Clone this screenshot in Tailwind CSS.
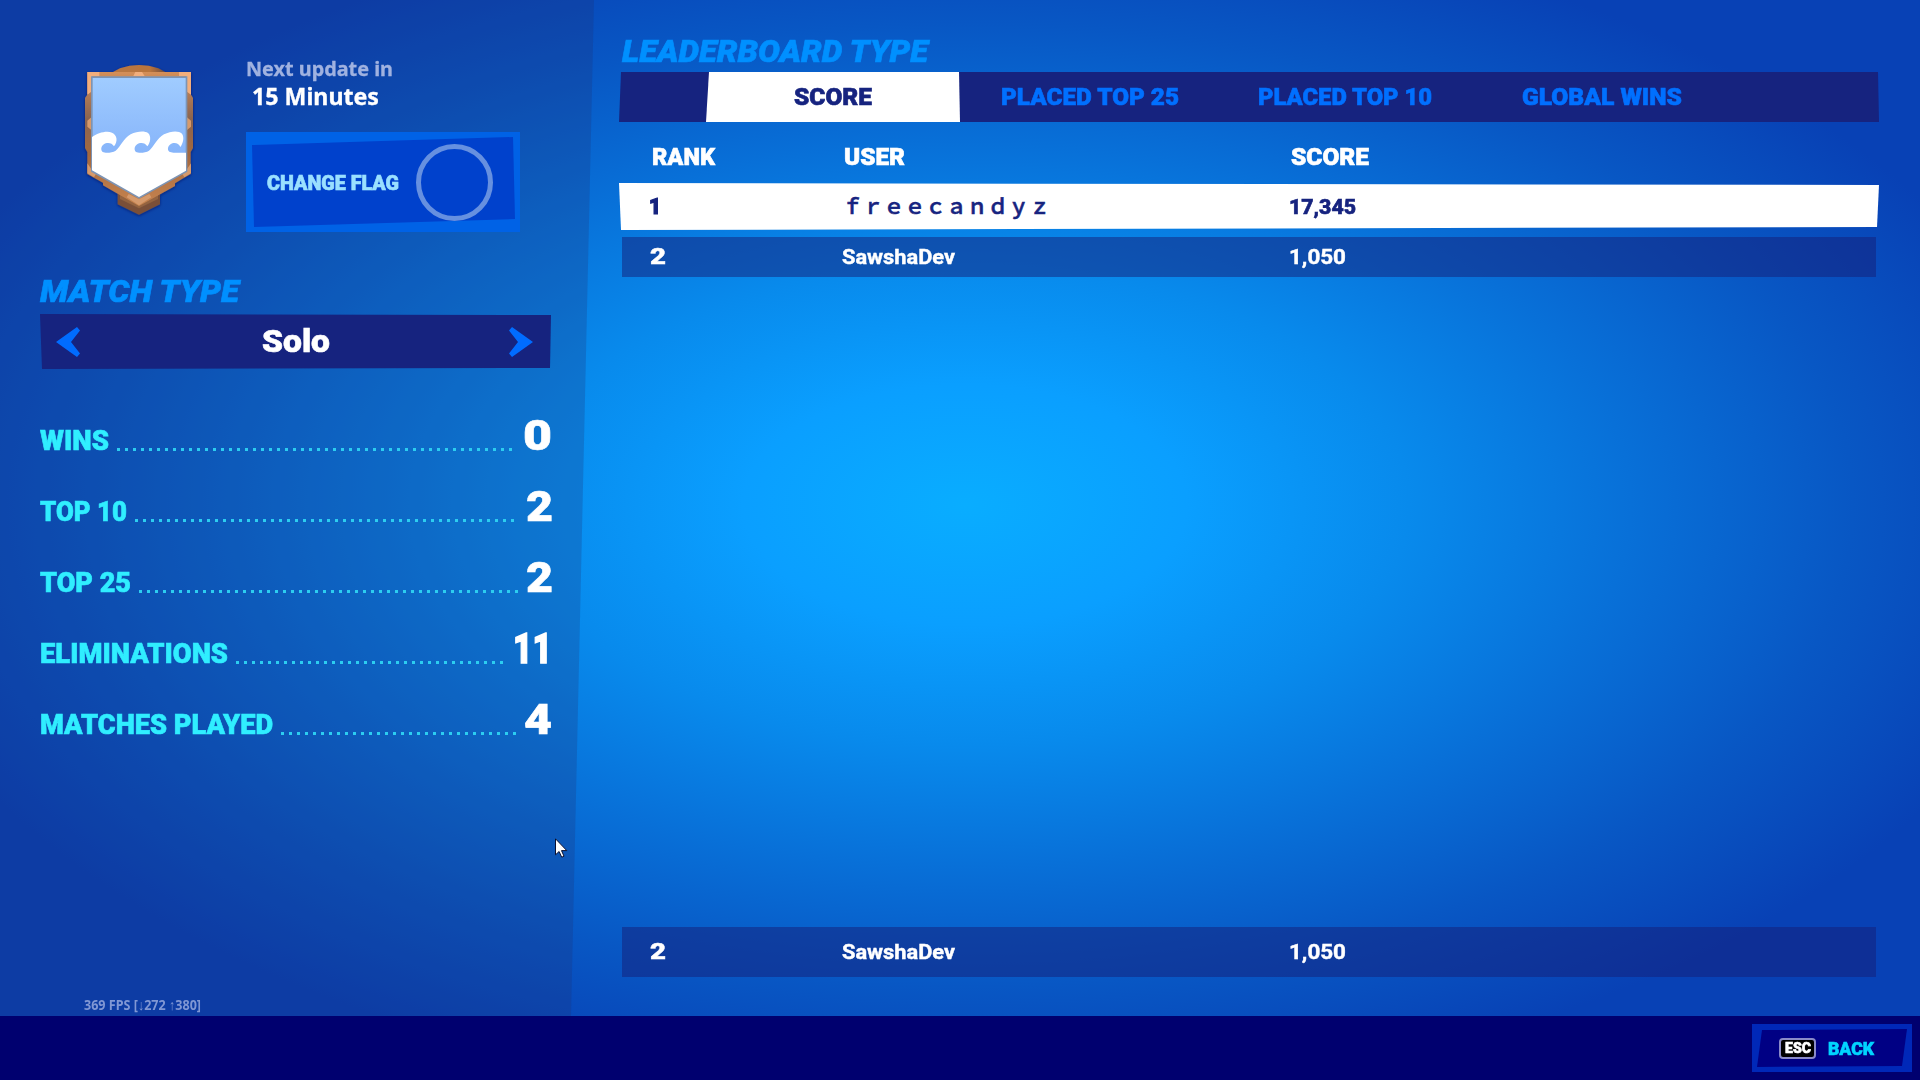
<!DOCTYPE html>
<html lang="en">
<head>
<meta charset="utf-8">
<title>Leaderboard</title>
<script src="https://cdn.jsdelivr.net/npm/@tailwindcss/browser@4"></script>
</head>
<body class="w-[1920px] h-[1080px] overflow-hidden flex flex-col font-['Roboto',sans-serif] font-black text-white relative [-webkit-text-stroke:0.6px]">
<main class="h-[1016px] flex bg-[radial-gradient(ellipse_1110px_602px_at_965px_505px,#09adff_0%,#0a9fff_20%,#088aec_40%,#0870d8_60%,#0857c4_80%,#0841b5_100%)]">

  <section class="w-[594px] h-full shrink-0 bg-[#1c2c70]/24 [clip-path:polygon(0_0,594px_0,571px_100%,0_100%)] flex flex-col relative">
    <div class="flex h-[232px]">
      <svg class="w-[140px] h-[170px] ml-[70px] mt-[50px] shrink-0" viewBox="0 0 420 510">
        <defs>
          <linearGradient id="sky" x2="0" y2="1"><stop offset="0" stop-color="#a0ccff"/><stop offset="1" stop-color="#86b4fa"/></linearGradient>
          <linearGradient id="wood" x2="0" y2="1"><stop offset="0" stop-color="#d58f58"/><stop offset=".35" stop-color="#8a6450"/><stop offset=".62" stop-color="#a4683e"/><stop offset="1" stop-color="#c78450"/></linearGradient>
          <linearGradient id="crest"><stop offset="0" stop-color="#b97844"/><stop offset=".7" stop-color="#b9743c"/><stop offset="1" stop-color="#6a4a3c"/></linearGradient>
          <filter id="soft" x="-20%" y="-20%" width="140%" height="140%"><feDropShadow dx="0" dy="3" stdDeviation="5" flood-color="#001050" flood-opacity=".6"/></filter>
        </defs>
        <g filter="url(#soft)">
          <path fill="#7a5039" d="M143 425h127v38l-63 31-64-31z"/>
          <path fill="#94633f" d="M150 425h114v22l-57 28-57-28z"/>
          <path fill="url(#crest)" d="M125 80V68l25-13q57-20 115 0l25 13v12z"/>
          <path fill="url(#wood)" d="M52 66h311v68l6 10v150l-7 12v66l-25 14-22 14v8l-108 60-108-62v-8l-47-26V306l-7-12V144l7-10z"/>
        </g>
        <path fill="#f2ae7c" d="M52 66h36v12H66v46l-14 10zM363 66h-36v12h22v46l14 10zM190 78l6-12h20l8 12z"/>
        <path fill="#d69a6c" d="M52 340l14 20 14 8-8 14-20-12zM363 340l-14 20-14 8 8 14 20-12zM52 212l12-10v38l-12-10zM363 212l-12-10v38l12-10zM176 432l31 16 31-16 6 10-37 24-37-24z"/>
        <path fill="#7d94b4" d="M63 79h289v286l-145 81L63 365z"/>
        <path fill="url(#sky)" d="M68 84h279v230H68z"/>
        <path fill="#fff" d="M66 261C82 249 110 241 126 248C142 255 144 274 132 289C127 280 117 277 107 280C94 285 90 299 98 306C106 310 126 309 137 302C152 291 160 265 182 253C202 243 224 242 234 249C245 258 241 279 232 289C227 280 217 277 207 280C194 285 190 299 198 306C206 310 226 309 237 302C252 291 260 265 282 253C302 243 326 241 336 251C344 262 339 281 331 291C327 281 317 277 307 280C294 285 290 299 298 305C306 309 330 309 348 308V362L207 441L66 361z"/>
      </svg>
      <div class="ml-9 pt-[56px] flex flex-col [-webkit-text-stroke:0.3px]">
        <div class="h-[26px] leading-[26px] text-[20px] font-bold text-[#a0b2e0] font-['Noto_Sans',sans-serif]"><span data-w="147" class="inline-block origin-left whitespace-nowrap">Next update in</span></div>
        <div class="h-[30px] leading-[30px] text-[22.5px] font-bold pl-[6px] font-['Noto_Sans',sans-serif]"><span data-w="127" class="inline-block origin-left whitespace-nowrap">15 Minutes</span></div>
        <button class="mt-5 w-[274px] h-[100px] shrink-0 bg-[#0062e6] relative text-left [-webkit-text-stroke:0.6px]">
          <span class="absolute inset-0 bg-[#0041cc] [clip-path:polygon(6px_13px,267px_5px,269px_87px,8px_95px)]"></span>
          <span class="relative flex items-center h-full pl-[21px]">
            <span class="w-[149px] text-[20px] text-[#9ae0ff] pt-px"><span data-w="132" class="inline-block origin-left whitespace-nowrap">CHANGE FLAG</span></span>
            <span class="w-[77px] h-[77px] rounded-full border-[5px] border-[#6690e0]"></span>
          </span>
        </button>
      </div>
    </div>

    <h2 class="mt-[42px] ml-10 h-[35px] leading-[36px] text-[31px] italic text-[#0090ff]"><span data-w="199" class="inline-block origin-left whitespace-nowrap">MATCH TYPE</span></h2>
    <div class="mt-[5px] ml-10 w-[511px] h-[55px] bg-[#16237f] [clip-path:polygon(0_0,511px_1px,510px_54px,2px_55px)] flex items-center justify-between pl-4 pr-[18px]">
      <svg class="w-6 h-[30px]" viewBox="0 0 24 30"><path fill="#006cff" d="M0 15 21 0l3 3.500L15 15l9 11.500L21 30z"/></svg>
      <div class="w-[66px] text-[31px] pt-px"><span data-w="68" class="inline-block origin-left whitespace-nowrap">Solo</span></div>
      <svg class="w-6 h-[30px]" viewBox="0 0 24 30"><path fill="#006cff" d="M24 15 3 0 0 3.500 9 15 0 26.500 3 30z"/></svg>
    </div>

    <div class="mt-[31px] ml-[40px] w-[511px] flex flex-col">
      <div class="h-[71px] flex items-center"><div class="w-[77px] pt-[11px] text-[27px] text-[#30eeff]"><span data-w="69" class="inline-block origin-left whitespace-nowrap">WINS</span></div><div class="w-[395px] h-[3px] mt-[27px] bg-[repeating-linear-gradient(90deg,#2ccdf0_0_3px,transparent_3px_8px)]"></div><div class="ml-auto w-[28px] text-[42px]"><span data-w="29" class="inline-block origin-left">0</span></div></div>
      <div class="h-[71px] flex items-center"><div class="w-[95px] pt-[11px] text-[27px] text-[#30eeff]"><span data-w="87" class="inline-block origin-left whitespace-nowrap">TOP 10</span></div><div class="w-[379px] h-[3px] mt-[27px] bg-[repeating-linear-gradient(90deg,#2ccdf0_0_3px,transparent_3px_8px)]"></div><div class="ml-auto w-[25px] text-[42px]"><span data-w="27" class="inline-block origin-left">2</span></div></div>
      <div class="h-[71px] flex items-center"><div class="w-[99px] pt-[11px] text-[27px] text-[#30eeff]"><span data-w="91" class="inline-block origin-left whitespace-nowrap">TOP 25</span></div><div class="w-[379px] h-[3px] mt-[27px] bg-[repeating-linear-gradient(90deg,#2ccdf0_0_3px,transparent_3px_8px)]"></div><div class="ml-auto w-[25px] text-[42px]"><span data-w="27" class="inline-block origin-left">2</span></div></div>
      <div class="h-[71px] flex items-center"><div class="w-[196px] pt-[11px] text-[27px] text-[#30eeff]"><span data-w="188" class="inline-block origin-left whitespace-nowrap">ELIMINATIONS</span></div><div class="w-[267px] h-[3px] mt-[27px] bg-[repeating-linear-gradient(90deg,#2ccdf0_0_3px,transparent_3px_8px)]"></div><div class="ml-auto w-[38px] text-[42px] [-webkit-text-stroke:1.4px]"><span data-w="39" class="inline-block origin-left">11</span></div></div>
      <div class="h-[71px] flex items-center"><div class="w-[241px] pt-[11px] text-[27px] text-[#30eeff]"><span data-w="233" class="inline-block origin-left whitespace-nowrap">MATCHES PLAYED</span></div><div class="w-[235px] h-[3px] mt-[27px] bg-[repeating-linear-gradient(90deg,#2ccdf0_0_3px,transparent_3px_8px)]"></div><div class="ml-auto w-[27px] text-[42px]"><span data-w="28" class="inline-block origin-left">4</span></div></div>
    </div>

    <div class="mt-auto mb-px ml-[84px] h-[22px] leading-[22px] text-[14.5px] font-bold text-[#8097d4] font-['Noto_Sans',sans-serif] [-webkit-text-stroke:0px]"><span data-w="117" class="inline-block origin-left whitespace-nowrap">369 FPS [↓272 ↑380]</span></div>
  </section>

  <section class="flex-1 pl-[25px] flex flex-col">
    <h2 class="mt-[34px] pl-[3px] h-[35px] leading-[36px] text-[31px] italic text-[#0090ff]"><span data-w="306" class="inline-block origin-left whitespace-nowrap">LEADERBOARD TYPE</span></h2>
    <nav class="mt-[3px] w-[1260px] h-[50px] bg-[#16237f] [clip-path:polygon(2px_0,1259px_0,1260px_50px,0_50px)] flex items-center text-[23.5px] text-[#0070ff]">
      <div class="ml-[87px] w-[254px] h-full bg-white text-[#16237f] [clip-path:polygon(3px_0,253px_0,254px_50px,0_50px)] flex items-center pl-[88px] pt-px"><span data-w="78" class="inline-block origin-left">SCORE</span></div>
      <div class="ml-[41px] w-[257px] pt-px"><span data-w="178" class="inline-block origin-left whitespace-nowrap">PLACED TOP 25</span></div>
      <div class="w-[264px] pt-px"><span data-w="174" class="inline-block origin-left whitespace-nowrap">PLACED TOP 10</span></div>
      <div class="pt-px"><span data-w="160" class="inline-block origin-left whitespace-nowrap">GLOBAL WINS</span></div>
    </nav>
    <div class="h-[61px] pt-[9px] w-[1260px] grid grid-cols-[192px_447px_1fr] items-center pl-[33px] text-[23.5px] leading-6">
      <div><span data-w="63" class="inline-block origin-left">RANK</span></div><div><span data-w="61" class="inline-block origin-left">USER</span></div><div><span data-w="78" class="inline-block origin-left">SCORE</span></div>
    </div>
    <div class="w-[1260px] h-[47px] bg-white text-[#16237f] [clip-path:polygon(0_0,1260px_2px,1258px_44px,2px_47px)] grid grid-cols-[193px_447px_1fr] items-center pl-[30px] text-[20px] font-bold">
      <div class="text-[22.5px] font-black [-webkit-text-stroke:1.2px]"><span data-w="12" class="inline-block origin-left">1</span></div>
      <div class="text-[20.8px] font-medium leading-6 mb-[3px] [-webkit-text-stroke:0.6px_#16237f] font-['Noto_Sans_CJK_JP',sans-serif]">ｆｒｅｅｃａｎｄｙｚ</div>
      <div class="font-extrabold"><span data-w="67" class="inline-block origin-left">17,345</span></div>
    </div>
    <div class="mt-[7px] ml-[3px] w-[1254px] h-10 bg-[#141e78]/50 grid grid-cols-[192px_447px_1fr] items-center pl-[28px] text-[20px] font-bold [-webkit-text-stroke:0.4px]">
      <div class="text-[22.5px] font-black"><span data-w="16" class="inline-block origin-left">2</span></div>
      <div><span data-w="113" class="inline-block origin-left">SawshaDev</span></div>
      <div><span data-w="57" class="inline-block origin-left">1,050</span></div>
    </div>
    <div class="mt-auto mb-[39px] ml-[3px] w-[1254px] h-[50px] bg-[#141e78]/50 grid grid-cols-[192px_447px_1fr] items-center pl-[28px] text-[20px] font-bold [-webkit-text-stroke:0.4px]">
      <div class="text-[22.5px] font-black"><span data-w="16" class="inline-block origin-left">2</span></div>
      <div><span data-w="113" class="inline-block origin-left">SawshaDev</span></div>
      <div><span data-w="57" class="inline-block origin-left">1,050</span></div>
    </div>
  </section>
</main>

<footer class="h-16 bg-[#00006f] flex items-center justify-end pr-2">
  <button class="w-[160px] h-12 bg-[#0028b8] relative">
    <span class="absolute inset-0 bg-[#000084] [clip-path:polygon(10px_6px,155px_5px,150px_42px,5px_43px)]"></span>
    <span class="relative flex items-center h-full pl-[27px]">
      <span class="w-[37px] h-[21px] rounded bg-black border-2 border-[#8a8ac8] flex items-center pl-[4px] text-[15px] leading-none"><span data-w="26" class="inline-block origin-left">ESC</span></span>
      <span class="ml-[12px] text-[18px] text-[#00d4ff]"><span data-w="46" class="inline-block origin-left">BACK</span></span>
    </span>
  </button>
</footer>

<svg class="absolute left-[555px] top-[838px] w-[13px] h-[20px]" viewBox="0 0 13 20"><path d="M.5.8v16l3.600-3.300 2.600 5.700 2.300-1-2.500-5.600h5.300z" fill="#fff" stroke="#0a1030"/></svg>

<script>
  // Condense or widen each label to its design width whenever its natural width changes.
  const fit = new ResizeObserver(entries => {
    for (const { target, contentRect } of entries) {
      if (contentRect.width) target.style.transform = 'scaleX(' + target.dataset.w / contentRect.width + ')';
    }
  });
  document.querySelectorAll('[data-w]').forEach(el => fit.observe(el));
</script>
</body>
</html>
